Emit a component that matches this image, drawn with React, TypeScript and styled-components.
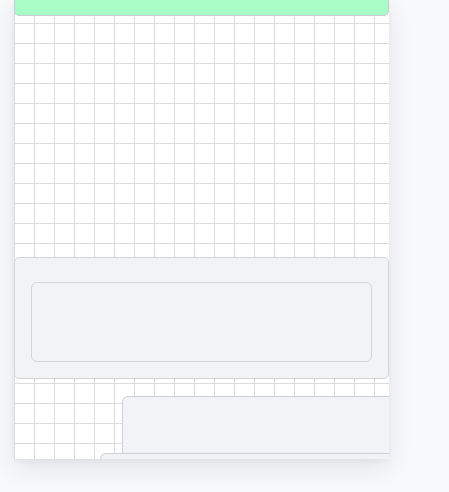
import React from "react";
import styled, { createGlobalStyle } from "styled-components";

const Global = createGlobalStyle`
  html, body { margin: 0; padding: 0; background: #f8f9fb; font-family: "Inter", "Liberation Sans", sans-serif; }
`;

const Page = styled.div`
  height: 492px;
  padding-left: 14px;
  box-sizing: border-box;
`;

const Canvas = styled.div`
  width: 375px;
  height: 459px;
  overflow: hidden;
  display: flex;
  flex-direction: column;
  background-color: #ffffff;
  background-image:
    linear-gradient(to right, #dcdcdf 1px, transparent 1px),
    linear-gradient(to bottom, #dcdcdf 1px, transparent 1px);
  background-size: 20px 20px;
  background-position: 0 3px;
  box-shadow: 0 10px 24px rgba(20, 30, 50, 0.09), 0 2px 6px rgba(20, 30, 50, 0.05);
`;

const TopBar = styled.div`
  flex: none;
  height: 16px;
  background: #a8fcc6;
  border: 1px solid #c8ccd2;
  border-top: none;
  border-radius: 0 0 5px 5px;
  box-sizing: border-box;
`;

const Spacer = styled.div<{ $h: number }>`
  flex: none;
  height: ${(p) => p.$h}px;
`;

const Section = styled.div`
  flex: none;
  height: 122px;
  box-sizing: border-box;
  background: #f2f3f5;
  border: 1px solid #d3d5d9;
  border-radius: 5px;
  padding: 24px 16px 16px 16px;
  display: flex;
`;

const Field = styled.div`
  flex: 1;
  background: #f2f3f5;
  border: 1px solid #d3d5d9;
  border-radius: 6px;
`;

const Card = styled.div<{ $left: number; $h: number }>`
  flex: none;
  margin-left: ${(p) => p.$left}px;
  width: 320px;
  height: ${(p) => p.$h}px;
  box-sizing: border-box;
  background: #f2f3f6;
  border: 1px solid #cdcfdb;
  border-bottom: none;
  border-radius: 6px 6px 0 0;
`;

export default function App() {
  return (
    <>
      <Global />
      <Page>
        <Canvas>
          <TopBar />
          <Spacer $h={241} />
          <Section>
            <Field />
          </Section>
          <Spacer $h={17} />
          <Card $left={108} $h={57} />
          <Card $left={86} $h={40} />
        </Canvas>
      </Page>
    </>
  );
}
